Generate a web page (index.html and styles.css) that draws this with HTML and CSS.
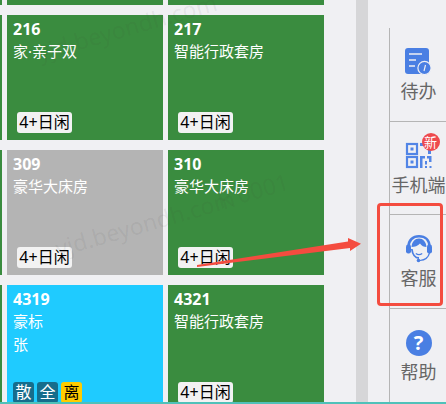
FILE: index.html
```html
<!DOCTYPE html>
<html lang="zh">
<head>
<meta charset="utf-8">
<title>房态</title>
<link rel="stylesheet" href="styles.css">
</head>
<body>
<div class="page">
  <div class="main">
    <div class="rooms">
      <div class="room green"></div><div class="room green"></div><div class="room green"></div>
      <div class="room green"></div>
      <div class="room green"><b class="num">216</b><span class="name">家·亲子双</span><div class="tags"><span class="tag">4+日闲</span></div></div>
      <div class="room green"><b class="num">217</b><span class="name">智能行政套房</span><div class="tags"><span class="tag">4+日闲</span></div></div>
      <div class="room green"></div>
      <div class="room gray"><b class="num">309</b><span class="name">豪华大床房</span><div class="tags"><span class="tag">4+日闲</span></div></div>
      <div class="room green"><b class="num">310</b><span class="name">豪华大床房</span><div class="tags"><span class="tag">4+日闲</span></div></div>
      <div class="room green"></div>
      <div class="room blue"><b class="num">4319</b><span class="name">豪标</span><span class="name">张</span><div class="tags"><span class="mark teal">散</span><span class="mark teal">全</span><span class="mark yellow">离</span></div></div>
      <div class="room green"><b class="num">4321</b><span class="name">智能行政套房</span><div class="tags"><span class="tag">4+日闲</span></div></div>
    </div>
    <div class="scrollbar"></div>
    <div class="side">
      <div class="item">
        <svg class="icon" viewBox="0 0 28 28"><rect x="0" y="0" width="24" height="26" rx="3" fill="#4a7fe3"/><path d="M4 6h13M4 12h7M4 18h6" stroke="#f0f0f4" stroke-width="1.6" fill="none"/><circle cx="19.500" cy="20" r="6.600" fill="#4a7fe3" stroke="#f0f0f4" stroke-width="1.200"/><path d="M20.500 17l-1.500 6" stroke="#f0f0f4" stroke-width="1.200"/></svg>
        <span class="label">待办</span>
      </div>
      <div class="item">
        <div class="icon-wrap">
          <svg class="icon" viewBox="0 0 28 28"><g fill="none" stroke="#5285e6" stroke-width="2.200"><rect x="2" y="2" width="10" height="10"/><rect x="2" y="15" width="10" height="10"/></g><g fill="#5285e6"><rect x="5.500" y="5.500" width="3" height="3"/><rect x="5.500" y="18.500" width="3" height="3"/><path d="M15 1h11v11h-3V4h-8zM15 14h5v2.500h-2.500V26H15zM22 14h4.500v6h-2.500v-3.500h-2zM20 19h2v3.500h-2zM24.500 24h2v2h-2zM20 24h2v2h-2z"/></g></svg>
          <span class="badge">新</span>
        </div>
        <span class="label">手机端</span>
      </div>
      <div class="item">
        <svg class="icon" viewBox="0 0 28 28"><path d="M3.500 12C3.500 5 8 1.300 14 1.300S24.500 5 24.500 12" stroke="#4a7fe3" stroke-width="2.600" fill="none"/><rect x="1" y="9.500" width="5" height="9" rx="2.200" fill="#4a7fe3"/><rect x="22" y="9.500" width="5" height="9" rx="2.200" fill="#4a7fe3"/><path d="M6.500 12C7 6.500 10 3.500 14 3.500S21 6.500 21.500 12C19 12 16.500 11 15 8.500C13 11 9.500 12 6.500 12Z" fill="#4a7fe3"/><path d="M6.800 14C7.500 19 10 23 14 23" stroke="#4a7fe3" stroke-width="1.800" fill="none"/><path d="M10.800 18.500Q14 20.800 17.200 18.500" stroke="#4a7fe3" stroke-width="1.300" fill="none"/><path d="M24.500 18C23.500 22 20 25 15 25.500" stroke="#4a7fe3" stroke-width="1.200" fill="none"/><circle cx="13.500" cy="25.500" r="1.800" fill="#4a7fe3"/></svg>
        <span class="label">客服</span>
      </div>
      <div class="item">
        <div class="help">?</div>
        <span class="label">帮助</span>
      </div>
    </div>
    <div class="watermark wm-a">yjd.beyondh.com</div>
    <div class="watermark wm-b">yjd.beyondh.com</div>
    <div class="watermark wm-c">R 0001</div>
    <div class="highlight"></div>
    <svg class="arrow" viewBox="0 0 170 35"><path d="M1 29L152 5.500 152 2 165 7.700 154 15 154 12 1 31z" fill="#f44c3f"/></svg>
  </div>
  <div class="footer"></div>
</div>
</body>
</html>
```
FILE: styles.css
```css
* { box-sizing: border-box; }
html, body { margin: 0; padding: 0; }
body {
  width: 446px;
  height: 404px;
  overflow: hidden;
  background: #f0f0f3;
  font-family: "Noto Sans", "Noto Sans CJK SC", sans-serif;
}
.page { display: flex; flex-direction: column; height: 404px; }
.main { position: relative; flex: 1; display: flex; overflow: hidden; min-height: 0; }
.rooms {
  flex: none;
  display: grid;
  grid-template-columns: repeat(3, 156px);
  grid-auto-rows: 125px;
  gap: 10px 5px;
  margin: -120px 0 0 -154px;
  width: 478px;
  align-content: start;
}
.room {
  position: relative;
  display: flex;
  flex-direction: column;
  padding: 4px 6px 0;
  color: #fff;
  overflow: hidden;
}
.green { background: #3a8c3f; }
.gray { background: #b4b4b4; }
.blue { background: #1fcbff; }
.num { font-size: 16px; line-height: 21px; font-weight: 700; }
.name { font-size: 15px; line-height: 23px; height: 23px; }
.tags { position: absolute; left: 6px; bottom: 7px; display: flex; gap: 3px; }
.room .tag {
  margin-left: 4px;
  background: #f2f2f2;
  color: #000;
  font-size: 16px;
  line-height: 21px;
  height: 21px;
  width: 55px;
  text-align: center;
  border-radius: 3px;
}
.mark {
  width: 21px;
  height: 21px;
  line-height: 21px;
  border-radius: 3px;
  font-size: 16px;
  text-align: center;
}
.teal { background: #166d8c; color: #fff; }
.yellow { background: #ffcc00; color: #000; }
.scrollbar {
  flex: none;
  width: 12px;
  margin-left: 32px;
  background: #d6d6d8;
}
.side {
  flex: none;
  width: 58px;
  margin: 28px 0 0 21px;
  border-left: 1px solid #b5b5b5;
  display: grid;
  grid-auto-rows: 93.5px;
}
.item {
  display: flex;
  flex-direction: column;
  align-items: center;
  padding-top: 20px;
  border-bottom: 1px solid #b5b5b5;
  color: #666;
}
.item:last-child { border-bottom: none; }
.icon { display: block; width: 28px; height: 28px; flex: none; }
.icon-wrap { position: relative; width: 28px; height: 28px; }
.badge {
  position: absolute;
  left: 17px;
  top: -9px;
  width: 18px;
  height: 18px;
  border-radius: 50%;
  background: #ee4a4e;
  color: #fff;
  font-size: 13px;
  line-height: 18px;
  text-align: center;
}
.help {
  width: 26px;
  height: 26px;
  margin: 1px 0;
  border-radius: 50%;
  background: #4a7fe3;
  color: #fff;
  font-size: 20px;
  font-weight: 700;
  line-height: 26px;
  text-align: center;
}
.label { margin-top: 4px; font-size: 18px; line-height: 22px; white-space: nowrap; }
.watermark {
  position: absolute;
  color: rgba(60, 60, 60, 0.08);
  font-size: 23px;
  line-height: 30px;
  white-space: nowrap;
  transform: rotate(-16deg);
  transform-origin: left bottom;
  pointer-events: none;
}
.wm-a { left: 42px; top: 37px; }
.wm-b { left: 60px; top: 233px; }
.wm-c { left: 222px; top: 185px; }
.highlight {
  position: absolute;
  left: 377px;
  top: 203px;
  width: 66px;
  height: 103px;
  border: 3px solid #f44c3f;
  border-radius: 4px;
}
.arrow { position: absolute; left: 196px; top: 236px; width: 170px; height: 35px; }
.footer { flex: none; height: 2px; background: #4fc1b9; }
```
